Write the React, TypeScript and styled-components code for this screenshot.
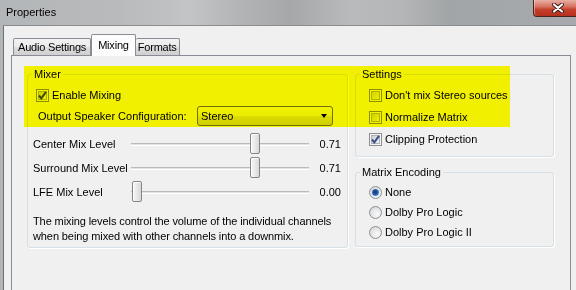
import React from 'react'
import styled, { createGlobalStyle } from 'styled-components'

const GlobalStyle = createGlobalStyle`
  html, body {
    margin: 0;
    padding: 0;
  }
  body {
    background: #f0f0f0;
    font-family: 'Liberation Sans', Arial, sans-serif;
    font-size: 11px;
    color: #000;
  }
`

const glass = `linear-gradient(90deg,
  #b3b6b8 0px, #b8babc 120px, #c3c4c5 190px, #b2b4b5 240px,
  #a5a7a9 290px, #b9babb 350px, #b4b6b7 400px, #a2a5a7 450px, #a8abad 576px)`

const Window = styled.div`
  position: relative;
  width: 576px;
  height: 290px;
  overflow: hidden;
  display: flex;
  flex-direction: column;
  background: ${glass};
`

const TitleBar = styled.div`
  height: 25px;
  flex: none;
  display: flex;
  align-items: flex-start;
`

const Title = styled.div`
  padding: 6px 0 0 6px;
  font-size: 11px;
  line-height: 13px;
`

const CloseButton = styled.div`
  margin-left: auto;
  width: 43px;
  height: 17px;
  box-sizing: border-box;
  border: 1px solid #4a2520;
  border-top: none;
  border-right: none;
  border-bottom-left-radius: 4px;
  background: linear-gradient(#e8b0a4 0%, #d77462 40%, #c4402c 60%, #b5311f 100%);
  box-shadow: inset 1px 0 0 rgba(255, 255, 255, 0.35);
  display: flex;
  align-items: center;
  padding-left: 18px;
`

const Client = styled.div`
  flex: 1;
  display: flex;
  flex-direction: column;
  margin-left: 3px;
  border-top: 1px solid #8b8e91;
  border-left: 1px solid #6f7275;
  background: #f0f0f0;
  padding: 8px 5px 0 7px;
  min-height: 0;
`

const TabStrip = styled.div`
  display: flex;
  align-items: flex-end;
  height: 21px;
  padding-left: 2px;
  position: relative;
  z-index: 1;
`

const Tab = styled.div<{ $active?: boolean; $pad: number }>`
  box-sizing: border-box;
  height: ${p => (p.$active ? 22 : 17)}px;
  margin-bottom: ${p => (p.$active ? -1 : 0)}px;
  padding: ${p => (p.$active ? 3 : 1)}px ${p => p.$pad}px 0;
  border: 1px solid #898c95;
  border-bottom: none;
  border-left-width: ${p => (p.$active ? 1 : 0)}px;
  border-radius: 2px 2px 0 0;
  background: ${p =>
    p.$active ? '#fcfcfc' : 'linear-gradient(#f2f2f2 0%, #ebebeb 50%, #dddddd 51%, #cfcfcf 100%)'};
  line-height: 14px;
  letter-spacing: -0.2px;
  &:first-child {
    border-left-width: 1px;
  }
`

const Panel = styled.div`
  flex: 1;
  border: 1px solid #898c95;
  border-bottom: none;
  background: #f0f0f0;
  padding: 11px 0 0 15px;
  display: grid;
  grid-template-columns: 321px 199px;
  column-gap: 7px;
  align-items: start;
`

const Column = styled.div`
  display: flex;
  flex-direction: column;
  gap: 8px;
`

const GroupBox = styled.fieldset<{ $padTop: number; $padBottom: number }>`
  margin: 0;
  min-width: 0;
  padding: ${p => p.$padTop}px 0 ${p => p.$padBottom}px;
  border: 1px solid #d5dfe5;
  border-radius: 3px;
  box-shadow: 1px 1px 0 #fff;
`

const Legend = styled.legend`
  margin-left: 4px;
  padding: 0 2px;
  line-height: 14px;
`

const OptionRow = styled.label<{ $h: number; $indent: number }>`
  display: flex;
  align-items: center;
  gap: 3px;
  height: ${p => p.$h}px;
  padding-left: ${p => p.$indent}px;
`

const CheckBox = styled.span`
  flex: none;
  width: 13px;
  height: 13px;
  box-sizing: border-box;
  border: 1px solid #8e8f8f;
  background: linear-gradient(135deg, #c3c8ce 0%, #e4e6e8 60%, #f8f8f8 100%);
  box-shadow: inset 0 0 0 1px #f4f4f4, inset 0 0 0 2px #aeb3b9;
  display: flex;
  align-items: center;
  justify-content: center;
`

const RadioButton = styled.span<{ $checked?: boolean }>`
  flex: none;
  width: 13px;
  height: 13px;
  box-sizing: border-box;
  border-radius: 50%;
  border: 1px solid #8e8f8f;
  background: radial-gradient(circle at 65% 65%, #fafafa 0%, #e0e2e4 60%, #c6cacf 100%);
  display: flex;
  align-items: center;
  justify-content: center;
  &::after {
    content: '';
    display: ${p => (p.$checked ? 'block' : 'none')};
    width: 7px;
    height: 7px;
    border-radius: 50%;
    background: radial-gradient(circle at 45% 45%, #163a78 0%, #1f54a3 40%, #5c97db 75%, #a9cdf2 100%);
  }
`

const ConfigRow = styled.div`
  display: flex;
  align-items: center;
  height: 20px;
  padding-left: 10px;
`

const ConfigLabel = styled.span`
  width: 159px;
  flex: none;
`

const Select = styled.div`
  width: 136px;
  height: 20px;
  box-sizing: border-box;
  border: 1px solid #707070;
  border-radius: 3px;
  background: linear-gradient(#f2f2f2 0%, #ebebeb 50%, #dddddd 51%, #cfcfcf 100%);
  display: flex;
  align-items: center;
  justify-content: space-between;
  padding: 0 5px 0 3px;
`

const Arrow = styled.span`
  width: 0;
  height: 0;
  border-left: 3.5px solid transparent;
  border-right: 3.5px solid transparent;
  border-top: 4px solid #000;
`

const SliderList = styled.div`
  margin-top: 6px;
  display: flex;
  flex-direction: column;
`

const SliderRow = styled.div`
  display: flex;
  align-items: center;
  height: 24px;
  padding: 0 6px 0 5px;
`

const SliderLabel = styled.span`
  width: 98px;
  flex: none;
`

const Track = styled.div`
  position: relative;
  width: 178px;
  height: 22px;
  flex: none;
  &::before {
    content: '';
    position: absolute;
    left: 0;
    right: 0;
    top: 10px;
    height: 1px;
    border-top: 1px solid #b9b9b9;
    border-bottom: 1px solid #fff;
    background: #e3e3e3;
  }
`

const Thumb = styled.div`
  position: absolute;
  top: 0;
  width: 10px;
  height: 21px;
  box-sizing: border-box;
  border: 1px solid #858585;
  border-radius: 2px;
  background: linear-gradient(90deg, #f6f6f6 0%, #e9e9e9 50%, #d8d8d8 100%);
  box-shadow: inset 1px 1px 0 #fff;
`

const SliderValue = styled.span`
  flex: 1;
  text-align: right;
`

const Description = styled.p`
  margin: 10px 0 0;
  padding: 0 5px;
  line-height: 15px;
  letter-spacing: -0.1px;
`

const Highlight = styled.div`
  position: absolute;
  left: 24px;
  top: 66px;
  width: 486px;
  height: 61px;
  background: #ffff00;
  mix-blend-mode: multiply;
  pointer-events: none;
`

function Check({ checked, color = '#3b4f8c' }: { checked?: boolean; color?: string }) {
  return (
    <CheckBox>
      {checked && (
        <svg width="11" height="11" viewBox="0 0 11 11">
          <polyline points="2,5.5 4.3,8.3 9,1.8" fill="none" stroke={color} strokeWidth="2" />
        </svg>
      )}
    </CheckBox>
  )
}

function Slider({ label, value }: { label: string; value: number }) {
  // thumb travels over the track minus its own width and a 1px inset on each side
  const left = 1 + value * (178 - 12)
  return (
    <SliderRow>
      <SliderLabel>{label}</SliderLabel>
      <Track>
        <Thumb style={{ left: Math.round(left) }} />
      </Track>
      <SliderValue>{value.toFixed(2)}</SliderValue>
    </SliderRow>
  )
}

export default function App() {
  return (
    <>
      <GlobalStyle />
      <Window>
        <TitleBar>
          <Title>Properties</Title>
          <CloseButton>
            <svg width="12" height="10" viewBox="0 0 12 10">
              <path d="M2 1.5 L10 8.5 M10 1.5 L2 8.5" stroke="#3a1712" strokeWidth="4" strokeLinecap="round" />
              <path d="M2 1.5 L10 8.5 M10 1.5 L2 8.5" stroke="#fff" strokeWidth="2.2" strokeLinecap="round" />
            </svg>
          </CloseButton>
        </TitleBar>

        <Client>
          <TabStrip>
            <Tab $pad={4}>Audio Settings</Tab>
            <Tab $pad={6} $active>Mixing</Tab>
            <Tab $pad={2}>Formats</Tab>
          </TabStrip>

          <Panel>
            <GroupBox $padTop={3} $padBottom={3}>
              <Legend>Mixer</Legend>
              <OptionRow $h={22} $indent={8}>
                <Check checked color="#404a60" />
                Enable Mixing
              </OptionRow>
              <ConfigRow>
                <ConfigLabel>Output Speaker Configuration:</ConfigLabel>
                <Select>
                  Stereo
                  <Arrow />
                </Select>
              </ConfigRow>
              <SliderList>
                <Slider label="Center Mix Level" value={0.71} />
                <Slider label="Surround Mix Level" value={0.71} />
                <Slider label="LFE Mix Level" value={0} />
              </SliderList>
              <Description>
                The mixing levels control the volume of the individual channels
                <br />
                when being mixed with other channels into a downmix.
              </Description>
            </GroupBox>

            <Column>
              <GroupBox $padTop={3} $padBottom={6}>
                <Legend>Settings</Legend>
                <OptionRow $h={22} $indent={13}>
                  <Check />
                  Don't mix Stereo sources
                </OptionRow>
                <OptionRow $h={22} $indent={13}>
                  <Check />
                  Normalize Matrix
                </OptionRow>
                <OptionRow $h={22} $indent={13}>
                  <Check checked />
                  Clipping Protection
                </OptionRow>
              </GroupBox>

              <GroupBox $padTop={3} $padBottom={4}>
                <Legend>Matrix Encoding</Legend>
                <OptionRow $h={20} $indent={13}>
                  <RadioButton $checked />
                  None
                </OptionRow>
                <OptionRow $h={20} $indent={13}>
                  <RadioButton />
                  Dolby Pro Logic
                </OptionRow>
                <OptionRow $h={20} $indent={13}>
                  <RadioButton />
                  Dolby Pro Logic II
                </OptionRow>
              </GroupBox>
            </Column>
          </Panel>
        </Client>

        <Highlight />
      </Window>
    </>
  )
}
